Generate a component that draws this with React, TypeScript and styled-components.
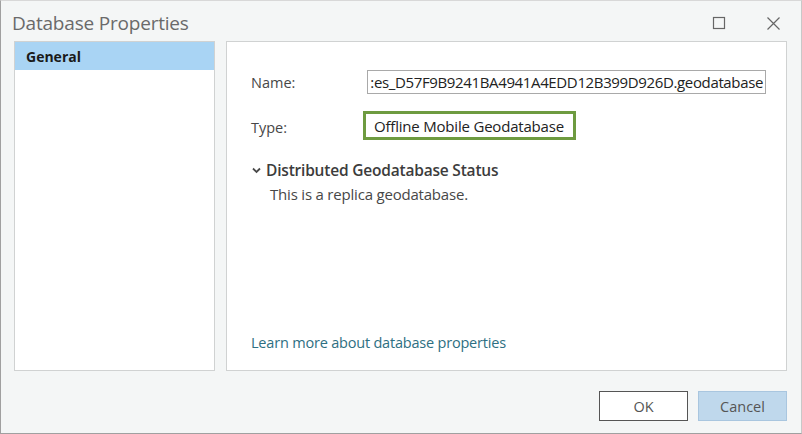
import React from "react";
import styled, { createGlobalStyle } from "styled-components";

const Global = createGlobalStyle`
  html, body { margin: 0; padding: 0; }
  body { font-family: "Open Sans", "Noto Sans", sans-serif; }
`;

const Window = styled.div`
  width: 802px;
  height: 434px;
  box-sizing: border-box;
  background: #f4f6f6;
  border: 1px solid #a0a0a0;
  border-top-color: #d8d8d8;
  border-right-color: #c8c8c8;
  display: flex;
  flex-direction: column;
`;

const TitleBar = styled.div`
  height: 40px;
  display: flex;
  align-items: center;
  padding-left: 11px;
  padding-right: 20px;
`;

const Title = styled.div`
  flex: 1;
  font-size: 19px;
  color: #6a6a6a;
  letter-spacing: -0.2px;
  padding-top: 3px;
`;

const TitleButtons = styled.div`
  display: flex;
  gap: 40px;
  align-items: center;
  padding-top: 4px;
`;

const Body = styled.div`
  display: flex;
  gap: 11px;
  padding: 0 14px 0 13px;
  height: 330px;
`;

const Panel = styled.div<{ $w?: number }>`
  background: #ffffff;
  border: 1px solid #d0d2d2;
  box-sizing: border-box;
  min-width: 0;
  ${(p) => (p.$w ? `width: ${p.$w}px; flex-shrink: 0;` : "flex: 1;")}
  display: flex;
  flex-direction: column;
`;

const NavItem = styled.div<{ $active?: boolean }>`
  height: 28px;
  display: flex;
  align-items: center;
  padding-left: 11px;
  font-size: 14px;
  font-weight: 700;
  color: #1a1a1a;
  background: ${(p) => (p.$active ? "#a9d4f4" : "transparent")};
`;

const Content = styled.div`
  flex: 1;
  min-width: 0;
  display: flex;
  flex-direction: column;
  padding: 28px 20px 18px 24px;
`;

const FieldRow = styled.div<{ $mt?: number }>`
  display: flex;
  align-items: center;
  min-width: 0;
  margin-top: ${(p) => p.$mt ?? 0}px;
`;

const Label = styled.div<{ $drop?: number }>`
  width: 116px;
  flex-shrink: 0;
  font-size: 14.5px;
  color: #474747;
  padding-top: ${(p) => p.$drop ?? 0}px;
`;

const TextInput = styled.div`
  flex: 1;
  min-width: 0;
  height: 24px;
  box-sizing: border-box;
  border: 1px solid #a9a9a9;
  display: flex;
  align-items: center;
  justify-content: flex-end;
  overflow: hidden;
  white-space: nowrap;
  padding-right: 2px;
  font-size: 15px;
  color: #222;
  letter-spacing: -0.36px;
`;

const HighlightBox = styled.div`
  margin-left: -4px;
  height: 29px;
  box-sizing: border-box;
  border: 3px solid #6e9b40;
  display: flex;
  align-items: center;
  padding: 0 9px 0 8px;
  font-size: 15px;
  color: #222;
  letter-spacing: -0.2px;
`;

const Section = styled.div`
  margin-top: 19px;
`;

const SectionHeader = styled.div`
  display: flex;
  align-items: center;
  gap: 4px;
  font-size: 15.5px;
  font-weight: 600;
  color: #3c3c3c;
  letter-spacing: -0.2px;
`;

const SectionText = styled.div`
  margin-top: 3px;
  padding-left: 19px;
  font-size: 15px;
  color: #474747;
  letter-spacing: -0.2px;
`;

const Spacer = styled.div`
  flex: 1;
`;

const Link = styled.a`
  font-size: 14.5px;
  color: #2e6f82;
  text-decoration: none;
  letter-spacing: -0.2px;
`;

const Footer = styled.div`
  display: flex;
  justify-content: flex-end;
  gap: 10px;
  padding: 20px 14px 0 0;
`;

const Button = styled.button<{ $primary?: boolean }>`
  width: 89px;
  height: 30px;
  box-sizing: border-box;
  font-family: inherit;
  font-size: 14.5px;
  color: #555;
  background: ${(p) => (p.$primary ? "#bfd8ec" : "#ffffff")};
  border: 1px solid ${(p) => (p.$primary ? "#a9c6df" : "#555")};
  padding: 0;
`;

const Chevron = () => (
  <svg width="11" height="11" viewBox="0 0 11 11">
    <path d="M2 3.5 L5.5 7 L9 3.5" fill="none" stroke="#4a4a4a" strokeWidth="1.8" />
  </svg>
);

const MaxIcon = () => (
  <svg width="14" height="14" viewBox="0 0 14 14">
    <rect x="1.5" y="1.5" width="11" height="11" fill="none" stroke="#666" strokeWidth="1.2" />
  </svg>
);

const CloseIcon = () => (
  <svg width="15" height="15" viewBox="0 0 15 15">
    <path d="M1.5 1.5 L13.5 13.5 M13.5 1.5 L1.5 13.5" fill="none" stroke="#666" strokeWidth="1.2" />
  </svg>
);

export default function App() {
  return (
    <>
      <Global />
      <Window>
        <TitleBar>
          <Title>Database Properties</Title>
          <TitleButtons>
            <MaxIcon />
            <CloseIcon />
          </TitleButtons>
        </TitleBar>
        <Body>
          <Panel $w={201}>
            <NavItem $active>General</NavItem>
          </Panel>
          <Panel>
            <Content>
              <FieldRow>
                <Label>Name:</Label>
                <TextInput>:es_D57F9B9241BA4941A4EDD12B399D926D.geodatabase</TextInput>
              </FieldRow>
              <FieldRow $mt={17}>
                <Label $drop={4}>Type:</Label>
                <HighlightBox>Offline Mobile Geodatabase</HighlightBox>
              </FieldRow>
              <Section>
                <SectionHeader>
                  <Chevron />
                  Distributed Geodatabase Status
                </SectionHeader>
                <SectionText>This is a replica geodatabase.</SectionText>
              </Section>
              <Spacer />
              <Link href="#">Learn more about database properties</Link>
            </Content>
          </Panel>
        </Body>
        <Footer>
          <Button>OK</Button>
          <Button $primary>Cancel</Button>
        </Footer>
      </Window>
    </>
  );
}
